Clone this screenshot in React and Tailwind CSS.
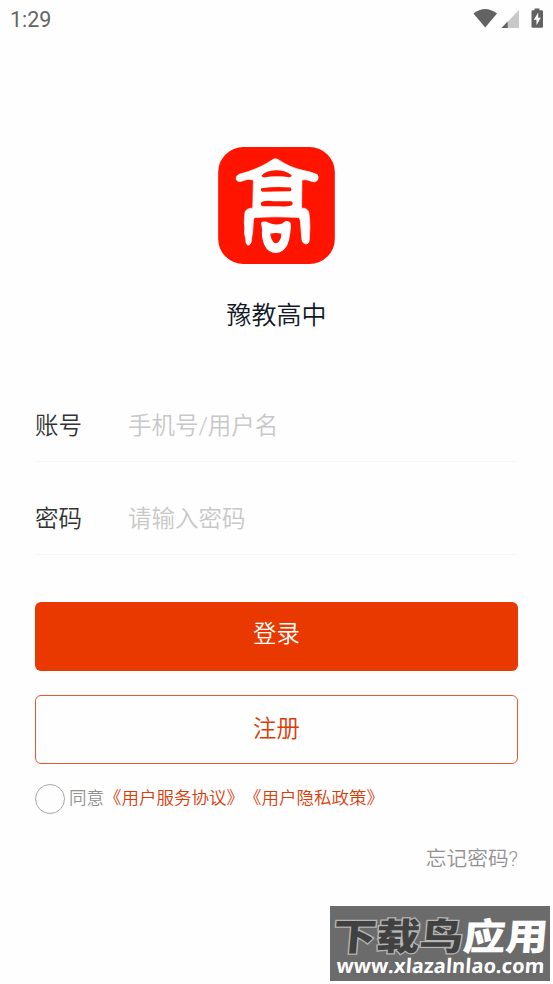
const cjk = "font-['Roboto','Noto_Sans_CJK_SC',sans-serif]";

function StatusBar() {
  return (
    <header className="flex h-[38px] items-center justify-between pl-[10px] pr-[9px] text-[#666]">
      <span className="pt-[1px] font-['Roboto',sans-serif] text-[21.5px] font-normal leading-[38px] text-[#666]">
        1:29
      </span>
      <svg className="h-[38px] w-[72px]" viewBox="0 0 72 38">
        <path d="M1.5 13.5Q13 4.5 25 13.5L13.2 27.5Z" fill="#626262" />
        <path d="M47 10V28H29.5Z" fill="#c8c8c8" />
        <path d="M35.7 21.5V28H29.5Z" fill="#626262" />
        <path d="M62.5 8.5h5v1.8h2.3q1.2 0 1.2 1.2V26.5q0 1.3-1.2 1.3h-9q-1.3 0-1.3-1.3V11.5q0-1.2 1.2-1.2h1.8Z" fill="#626262" />
        <path d="M66.2 12.5L61.8 19.8h2.7v5.4l4.2-7.5h-2.5Z" fill="#fff" />
      </svg>
    </header>
  );
}

function Logo() {
  return (
    <svg className="size-[117px]" viewBox="24 20 351 352">
      <rect x="24" y="20" width="351" height="352" rx="76" fill="#ff1400" />
      <path
        d="M190 57Q197 53 205 58Q240 82 282 91Q307 96 322 103Q328 111 322 121Q314 128 304 123Q287 116 276 119L275 204Q294 203 297 218Q300 240 300 262L298 302Q296 312 288 312Q278 310 276 300L271 240L267 232Q200 228 133 232L130 241Q129 276 123 307Q119 317 112 315Q106 309 107 297Q101 278 104 264Q102 248 103 236L105 215Q110 204 128 204L130 119Q113 114 97 122Q83 128 78 117Q76 107 87 102Q140 88 172 68Z"
        fill="#fff"
        stroke="#fff"
        strokeWidth="2"
      />
      <path d="M155 106Q168 91 196 90Q226 89 245 105Q246 110 239 111Q197 105 162 112Q154 111 155 106Z" fill="#ff1400" />
      <path d="M154 144Q197 138 242 142Q247 148 242 153Q198 154 157 155Q150 149 154 144Z" fill="#ff1400" />
      <path d="M156 185Q170 180 190 183L244 183Q251 188 246 195Q230 201 209 198L156 198Q148 191 156 185Z" fill="#ff1400" />
      <path
        d="M153 248Q162 241 176 248Q195 257 217 250Q231 236 242 249Q245 262 241 277Q239 300 231 317Q218 338 198 339Q174 338 164 317Q153 291 156 268Z"
        fill="#fff"
      />
      <path d="M181 281Q197 276 214 281Q214 299 203 308Q197 311 192 308Q182 297 181 281Z" fill="#ff1400" />
    </svg>
  );
}

function Field({ label, placeholder, type }) {
  return (
    <label className="flex h-[93px] items-center border-b border-[#f6f6f6] pt-[22px] text-[23.5px]">
      <span className="w-[93px] shrink-0 pt-[2px] text-[#333]">{label}</span>
      <input
        type={type}
        placeholder={placeholder}
        className="h-[40px] min-w-0 flex-1 bg-transparent outline-none placeholder:text-[#c8c8c8] placeholder:opacity-100"
      />
    </label>
  );
}

function Watermark() {
  return (
    <div className="absolute left-[330px] top-[906px] h-[75px] w-[220px] bg-[#6b6b6b]">
      <svg className="block h-full w-full" viewBox="0 0 220 75">
        <g fontFamily="'Noto Sans CJK SC', sans-serif" fontWeight="900" fontSize="37" transform="translate(2 43.5) skewX(-5)">
          <text textLength="130" lengthAdjust="spacingAndGlyphs" fill="#414141" stroke="#b5b5b5" strokeWidth="2.5" paintOrder="stroke">
            下载鸟
          </text>
          <text x="130" textLength="85" lengthAdjust="spacingAndGlyphs" fill="#fff">
            应用
          </text>
        </g>
        <text
          x="0"
          y="0"
          transform="translate(6 67) skewX(-4)"
          textLength="208"
          lengthAdjust="spacingAndGlyphs"
          fill="#fff"
          fontFamily="'Open Sans', 'Noto Sans', sans-serif"
          fontWeight="700"
          fontSize="20"
        >
          www.xlazalnlao.com
        </text>
      </svg>
    </div>
  );
}

export default function App() {
  return (
    <div className={`relative h-[984px] w-[553px] overflow-hidden bg-[#fefefe] font-[350] ${cjk}`}>
      <StatusBar />
      <main className="px-[35px]">
        <div className="flex flex-col items-center pt-[109px]">
          <Logo />
          <h1 className="mt-[32px] text-[25px] font-[350] leading-[40px] text-[#111827]">豫教高中</h1>
        </div>
        <form className="mt-[33px]" onSubmit={(e) => e.preventDefault()}>
          <Field label="账号" placeholder="手机号/用户名" type="text" />
          <Field label="密码" placeholder="请输入密码" type="password" />
          <button className="mt-[47px] block h-[69px] w-full rounded-[6px] bg-[#e93900] pb-[3px] text-[23.4px] text-white">
            登录
          </button>
          <button className="mt-[24px] block h-[69px] w-full rounded-[6px] border border-[#e0592f] text-[23.4px] text-[#dc3c08]">
            注册
          </button>
        </form>
        <div className="mt-[20px] flex h-[30px] items-center whitespace-nowrap text-[17.5px]">
          <span className="size-[30px] shrink-0 rounded-full border border-[#aaa]" />
          <span className="ml-[4px] pb-px text-[#929292]">同意</span>
          <span className="pb-px text-[#dc3c08]">《用户服务协议》</span>
          <span className="pb-px text-[#dc3c08]">《用户隐私政策》</span>
        </div>
        <p className="mt-[30px] text-right text-[20.7px] leading-[30px] text-[#929292]">忘记密码?</p>
      </main>
      <Watermark />
    </div>
  );
}
